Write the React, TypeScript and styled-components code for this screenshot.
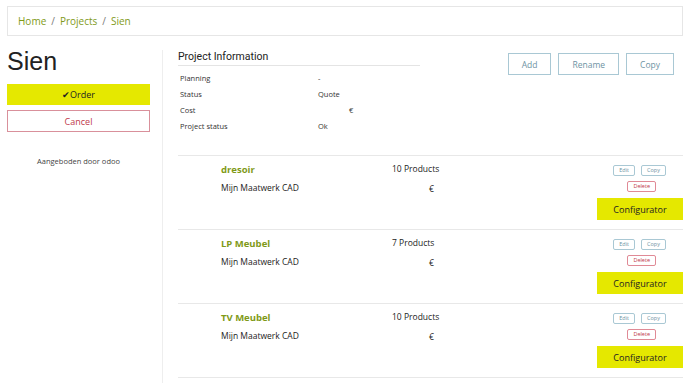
import React from "react";
import styled, { createGlobalStyle } from "styled-components";

type Product = {
  name: string;
  subtitle: string;
  count: number;
};

const products: Product[] = [
  { name: "dresoir", subtitle: "Mijn Maatwerk CAD", count: 10 },
  { name: "LP Meubel", subtitle: "Mijn Maatwerk CAD", count: 7 },
  { name: "TV Meubel", subtitle: "Mijn Maatwerk CAD", count: 10 },
];

const info: Array<[string, string, boolean?]> = [
  ["Planning", "-"],
  ["Status", "Quote"],
  ["Cost", "€", true],
  ["Project status", "Ok"],
];

function App() {
  return (
    <Page>
      <GlobalStyle />
      <Breadcrumb>
        <Crumb>Home</Crumb>
        <Sep>/</Sep>
        <Crumb>Projects</Crumb>
        <Sep>/</Sep>
        <Crumb>Sien</Crumb>
      </Breadcrumb>
      <Main>
        <Sidebar>
          <Title>Sien</Title>
          <OrderButton>✔Order</OrderButton>
          <CancelButton>Cancel</CancelButton>
          <Powered>Aangeboden door odoo</Powered>
        </Sidebar>
        <Content>
          <TopRow>
            <InfoBlock>
              <InfoHead>Project Information</InfoHead>
              <InfoTable>
                {info.map(([label, value, shifted]) => (
                  <InfoRow key={label}>
                    <InfoLabel>{label}</InfoLabel>
                    <InfoValue shifted={shifted}>{value}</InfoValue>
                  </InfoRow>
                ))}
              </InfoTable>
            </InfoBlock>
            <Actions>
              <OutlineButton>Add</OutlineButton>
              <OutlineButton>Rename</OutlineButton>
              <OutlineButton>Copy</OutlineButton>
            </Actions>
          </TopRow>
          <ProductList>
            {products.map((p) => (
              <ProductRow key={p.name}>
                <ProductInfo>
                  <ProductName>{p.name}</ProductName>
                  <ProductSub>{p.subtitle}</ProductSub>
                </ProductInfo>
                <ProductMeta>
                  <span>{p.count} Products</span>
                  <Price>€</Price>
                </ProductMeta>
                <ProductActions>
                  <SmallRow>
                    <SmallButton tone="blue">Edit</SmallButton>
                    <SmallButton tone="blue">Copy</SmallButton>
                  </SmallRow>
                  <SmallButton tone="red">Delete</SmallButton>
                  <ConfigButton>Configurator</ConfigButton>
                </ProductActions>
              </ProductRow>
            ))}
          </ProductList>
        </Content>
      </Main>
    </Page>
  );
}

export default App;

const GlobalStyle = createGlobalStyle`
  body {
    margin: 0;
    background: #fff;
    font-family: "Open Sans", "Liberation Sans", sans-serif;
    color: #222;
  }
`;

const Page = styled.div`
  width: 690px;
  height: 383px;
  overflow: hidden;
  padding: 6px 7px 0;
  box-sizing: border-box;
`;

const Breadcrumb = styled.nav`
  height: 30px;
  border: 1px solid #e6e6e6;
  display: flex;
  align-items: center;
  padding-left: 10px;
  box-sizing: border-box;
  font-size: 10px;
  color: #7f9a18;
`;

const Crumb = styled.span``;

const Sep = styled.span`
  color: #777;
  margin: 0 5px;
`;

const Main = styled.div`
  display: flex;
  margin-top: 14px;
`;

const Sidebar = styled.aside`
  width: 143px;
  margin-right: 12px;
  display: flex;
  flex-direction: column;
`;

const Title = styled.h1`
  font-family: "Liberation Sans", Arial, sans-serif;
  font-weight: normal;
  font-size: 25px;
  margin: -3px 0 9px;
  line-height: 28px;
  color: #222;
`;

const OrderButton = styled.div`
  height: 21px;
  background: #e5e800;
  display: flex;
  align-items: center;
  justify-content: center;
  font-size: 9px;
  color: #222;
`;

const CancelButton = styled.div`
  margin-top: 5px;
  height: 22px;
  border: 1px solid #d9909b;
  box-sizing: border-box;
  display: flex;
  align-items: center;
  justify-content: center;
  font-size: 9px;
  color: #c0394b;
`;

const Powered = styled.div`
  margin-top: 24px;
  text-align: center;
  font-size: 7.5px;
  color: #444;
`;

const Content = styled.section`
  flex: 1;
  border-left: 1px solid #eee;
  padding-left: 15px;
  min-height: 340px;
`;

const TopRow = styled.div`
  display: flex;
  justify-content: space-between;
  align-items: flex-start;
`;

const InfoBlock = styled.div`
  width: 242px;
`;

const InfoHead = styled.div`
  font-family: Roboto, "Liberation Sans", sans-serif;
  font-size: 10.5px;
  color: #222;
  padding-bottom: 1px;
  border-bottom: 1px solid #e4e4e4;
  line-height: 14px;
`;

const InfoTable = styled.div`
  padding: 4px 0 0 2px;
`;

const InfoRow = styled.div`
  display: grid;
  grid-template-columns: 138px 1fr;
  height: 16px;
  align-items: center;
  font-size: 7.5px;
  color: #333;
`;

const InfoLabel = styled.span``;

const InfoValue = styled.span<{ shifted?: boolean }>`
  padding-left: ${(p) => (p.shifted ? "31px" : "0")};
`;

const Actions = styled.div`
  display: flex;
  gap: 7px;
  margin-right: 9px;
  margin-top: 3px;
`;

const OutlineButton = styled.div`
  height: 22px;
  padding: 0 13px;
  border: 1px solid #a9c8d4;
  box-sizing: border-box;
  display: flex;
  align-items: center;
  font-size: 8.5px;
  color: #6e93a3;
`;

const ProductList = styled.div`
  margin-top: 21px;
  border-top: 1px solid #e8e8e8;
`;

const ProductRow = styled.div`
  display: flex;
  height: 74px;
  border-bottom: 1px solid #e8e8e8;
  box-sizing: border-box;
  padding-top: 7px;
`;

const ProductInfo = styled.div`
  width: 171px;
  padding-left: 43px;
  display: flex;
  flex-direction: column;
  gap: 6px;
`;

const ProductName = styled.div`
  font-weight: 700;
  font-size: 9.5px;
  color: #7f9a18;
`;

const ProductSub = styled.div`
  font-size: 8.5px;
  color: #222;
`;

const ProductMeta = styled.div`
  width: 80px;
  display: flex;
  flex-direction: column;
  font-size: 8.5px;
  color: #222;
`;

const Price = styled.span`
  margin-top: 9px;
  padding-left: 37px;
`;

const ProductActions = styled.div`
  flex: 1;
  display: flex;
  flex-direction: column;
  align-items: flex-end;
  margin-top: 2px;
`;

const SmallRow = styled.div`
  display: flex;
  gap: 6px;
  margin-right: 17px;
  margin-bottom: 5px;
`;

const SmallButton = styled.div<{ tone: "blue" | "red" }>`
  height: 11px;
  box-sizing: border-box;
  padding: 0 5px;
  border: 1px solid ${(p) => (p.tone === "red" ? "#e08a96" : "#a9c8d4")};
  border-radius: 2px;
  font-size: 5.5px;
  line-height: 9px;
  color: ${(p) => (p.tone === "red" ? "#c0394b" : "#6e93a3")};
  margin-right: ${(p) => (p.tone === "red" ? "27px" : "0")};
`;

const ConfigButton = styled.div`
  margin-top: 6px;
  width: 86px;
  height: 22px;
  background: #e5e800;
  display: flex;
  align-items: center;
  justify-content: center;
  font-size: 9px;
  color: #222;
`;
